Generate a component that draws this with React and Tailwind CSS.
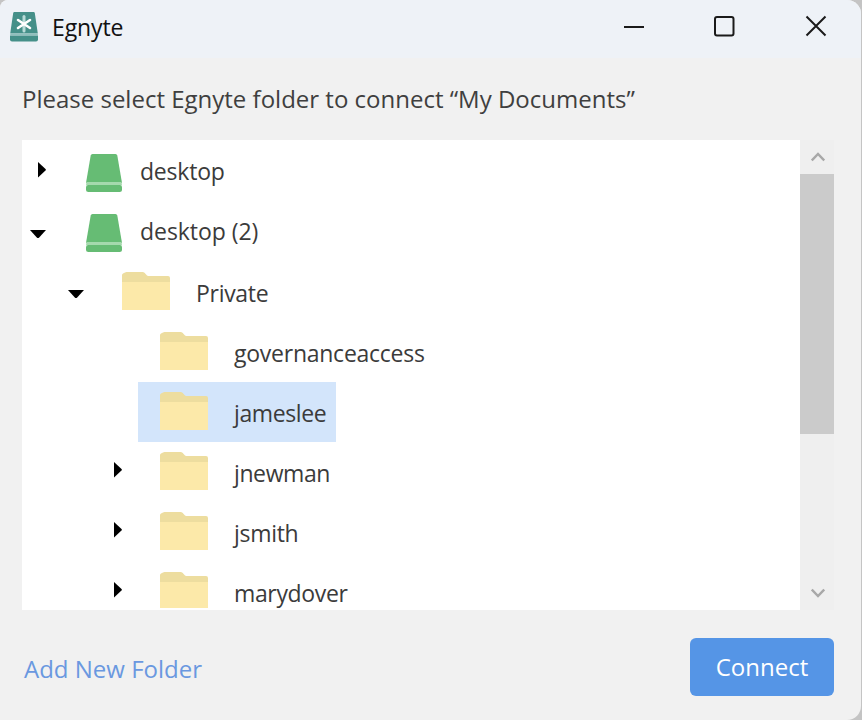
import { useState } from 'react';

const INDENT = ['pl-2', 'pl-[46px]', 'pl-[84px]'];

const rows = [
  { id: 1, name: 'desktop', type: 'drive', depth: 0, arrow: 'right', tracking: 'tracking-[-0.2px]' },
  { id: 2, name: 'desktop (2)', type: 'drive', depth: 0, arrow: 'down', tracking: 'tracking-[-0.05px]' },
  { id: 3, name: 'Private', type: 'folder', depth: 1, arrow: 'down', tracking: 'tracking-[-0.3px]' },
  { id: 4, name: 'governanceaccess', type: 'folder', depth: 2, tracking: 'tracking-[-0.25px]' },
  { id: 5, name: 'jameslee', type: 'folder', depth: 2, tracking: 'tracking-[-0.4px]' },
  { id: 6, name: 'jnewman', type: 'folder', depth: 2, arrow: 'right', tracking: 'tracking-[-0.4px]' },
  { id: 7, name: 'jsmith', type: 'folder', depth: 2, arrow: 'right', tracking: 'tracking-[-0.3px]' },
  { id: 8, name: 'marydover', type: 'folder', depth: 2, arrow: 'right', tracking: 'tracking-[-0.35px]' },
];

function AppLogo() {
  return (
    <svg className="w-7 h-[30px]" viewBox="0 0 28 30" fill="none">
      <path d="M4.4 0h19.2q1 0 1.2 1l3 20.5H.2L3.2 1q.2-1 1.200-1z" fill="#459089" />
      <path d="M.2 22.500h27.600" stroke="#8fc0bc" strokeWidth="1.600" />
      <path d="M0 23.500h28v4q0 2-2 2H2q-2 0-2-2z" fill="#459089" />
      <path d="M14 4.500v14.500" stroke="#b9dbd8" strokeWidth="3" strokeLinecap="round" />
      <path d="M8 8l12 8M20 8L8 16" stroke="#fff" strokeWidth="2.600" strokeLinecap="round" />
    </svg>
  );
}

function DriveIcon() {
  return (
    <svg className="w-9 h-[38px] shrink-0" viewBox="0 0 36 38">
      <path d="M6.500 0h23q1.500 0 1.800 1.500L36 29H0L4.700 1.500Q5 0 6.500 0z" fill="#66bc74" />
      <path d="M.4 28h35.200l.4 3.500H0z" fill="#a5d9ad" />
      <rect y="31" width="36" height="7" rx="2.500" fill="#66bc74" />
    </svg>
  );
}

function FolderIcon() {
  return (
    <svg className="w-12 h-[38px] shrink-0" viewBox="0 0 48 38">
      <path d="M0 38V3q0-1 1-1.500L3 .4Q3.600 0 4.500 0h16q1.200 0 2 .8L25 3.600q.5.400 1.200.400H46q2 0 2 2v32z" fill="#eddd9f" />
      <path d="M0 10h48v28H0z" fill="#fce9a9" />
    </svg>
  );
}

function Arrow({ direction }) {
  if (!direction) return null;
  return (
    <svg className="w-4 h-4" viewBox="0 0 16 16" fill="#000">
      {direction === 'down' ? <path d="M0 5h16l-6.800 7.400q-1.200 1.200-2.400 0z" /> : <path d="M8 0v15.500l7.500-7q.8-.75 0-1.500z" />}
    </svg>
  );
}

function TreeRow({ row, selected, onSelect }) {
  const isDrive = row.type === 'drive';
  return (
    <div className={`flex h-[60px] shrink-0 ${INDENT[row.depth]}`}>
      <div className={`w-8 shrink-0 ${row.arrow === 'down' ? 'pt-[23px]' : 'pt-5'}`}>
        <Arrow direction={row.arrow} />
      </div>
      <div
        onClick={() => onSelect(row.id)}
        className={`flex items-start cursor-default pr-2.5 ${isDrive ? 'pl-6 gap-[18px] pt-3' : 'pl-[22px] gap-[26px] pt-2.5'} ${
          selected ? 'bg-[#d3e5fb]' : ''
        }`}
      >
        {isDrive ? <DriveIcon /> : <FolderIcon />}
        <span className={`text-[23px] leading-7 text-[#3b3b3b] whitespace-nowrap ${row.tracking} ${isDrive ? 'pt-[3px]' : 'pt-[7px]'}`}>
          {row.name}
        </span>
      </div>
    </div>
  );
}

function ScrollBar() {
  return (
    <div className="w-[34px] flex flex-col bg-[#efefef]">
      <div className="h-[34px] flex items-center justify-center pl-0.5">
        <svg className="w-3.5 h-2.5" viewBox="0 0 14 10" fill="none" stroke="#a8a8a8" strokeWidth="2.400">
          <path d="M.8 8.500L7 2l6.200 6.500" />
        </svg>
      </div>
      <div className="h-[260px] bg-[#cbcbcb]"></div>
      <div className="mt-auto h-[34px] flex items-center justify-center pl-0.5">
        <svg className="w-3.5 h-2.5" viewBox="0 0 14 10" fill="none" stroke="#a8a8a8" strokeWidth="2.400">
          <path d="M.8 1.500L7 8l6.200-6.500" />
        </svg>
      </div>
    </div>
  );
}

function App() {
  const [selectedId, setSelectedId] = useState(5);

  return (
    <div className="w-[862px] h-[720px] overflow-hidden bg-[#c4c4c4] font-['Open_Sans',sans-serif]">
      <div className="w-[861px] h-[720px] flex flex-col rounded-tl-lg rounded-r-[14px] overflow-hidden bg-[#f1f1f1]">
        <div className="h-[58px] shrink-0 flex items-start bg-[#eef2f7]">
          <div className="flex pl-2.5 pt-3 gap-3.5">
            <AppLogo />
            <span className="text-[23px] leading-[30px] tracking-[-0.1px] text-[#111]">Egnyte</span>
          </div>
          <div className="ml-auto flex items-center gap-[69px] pr-[34px] pt-[15px]">
            <svg className="w-[22px] h-[22px]" viewBox="0 0 22 22" stroke="#1a1a1a" strokeWidth="2">
              <path d="M1 12h20" />
            </svg>
            <svg className="w-[22px] h-[22px]" viewBox="0 0 22 22" fill="none" stroke="#1a1a1a" strokeWidth="2">
              <rect x="1" y="2" width="18.500" height="18.500" rx="2" />
            </svg>
            <svg className="w-[22px] h-[22px]" viewBox="0 0 22 22" fill="none" stroke="#1a1a1a" strokeWidth="2">
              <path d="M1.500 1.500l19 19M20.500 1.500l-19 19" />
            </svg>
          </div>
        </div>

        <p className="pl-[22px] pt-[25px] h-[82px] shrink-0 text-2xl text-[#3f3f3f] whitespace-nowrap">
          Please select Egnyte folder to connect “My Documents”
        </p>

        <div className="ml-[22px] w-[812px] h-[470px] shrink-0 flex bg-white">
          <div className="flex-1 flex flex-col py-0.5">
            <div className="flex-1 min-h-0 overflow-hidden">
              {rows.map((row) => (
                <TreeRow key={row.id} row={row} selected={row.id === selectedId} onSelect={setSelectedId} />
              ))}
            </div>
          </div>
          <ScrollBar />
        </div>

        <div className="flex items-start justify-between pl-6 pr-[27px] pt-7">
          <button className="pt-[15px] text-2xl text-[#6a98e0]">Add New Folder</button>
          <button className="w-36 h-[58px] rounded-md bg-[#5595e6] text-2xl text-white">Connect</button>
        </div>
      </div>
    </div>
  );
}

export default App;
